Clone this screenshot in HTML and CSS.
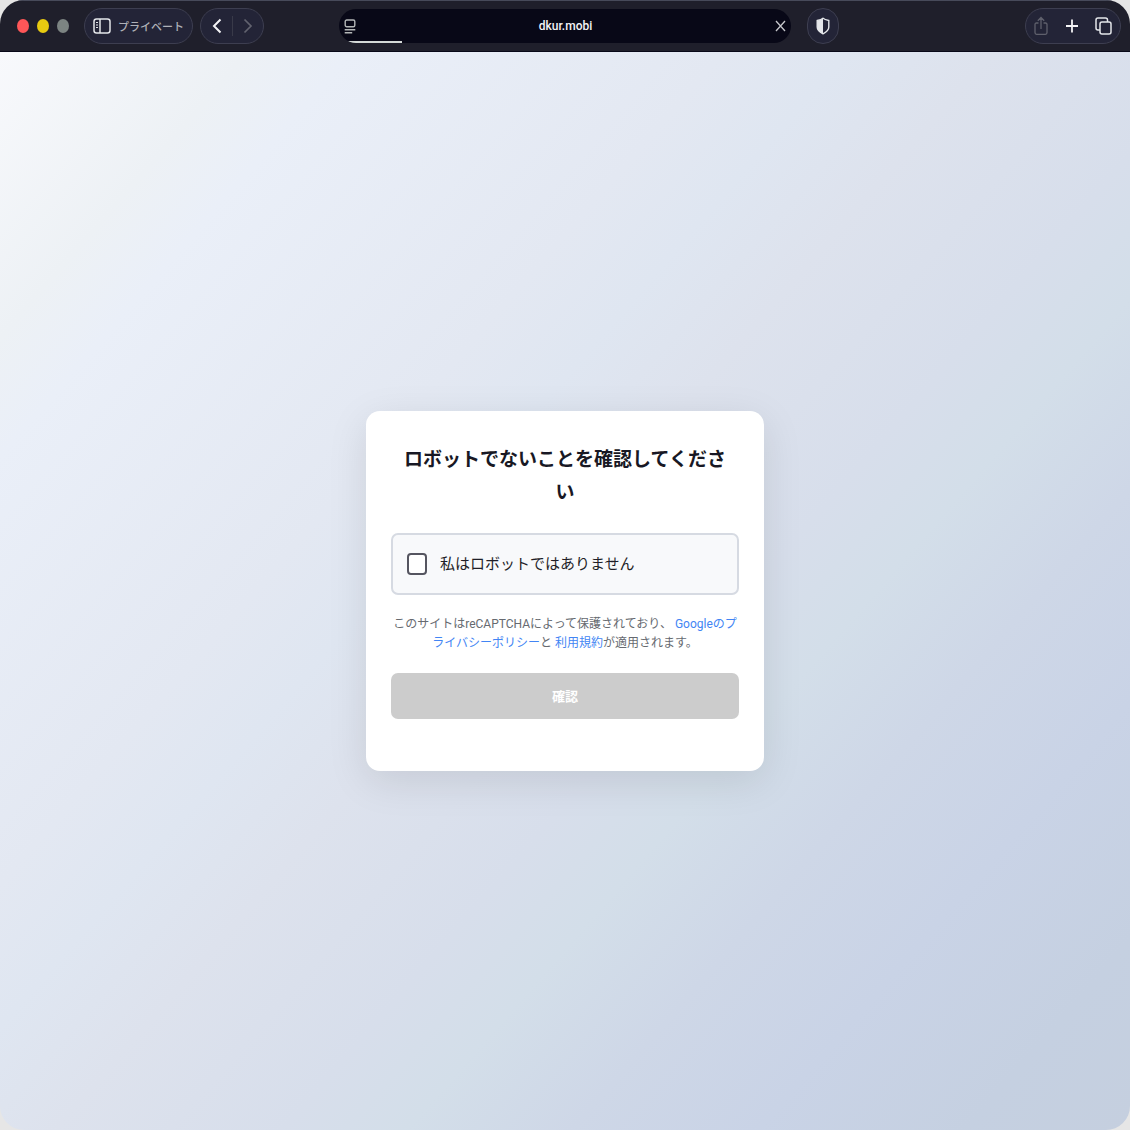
FILE: index.html
```html
<!DOCTYPE html>
<html lang="ja">
<head>
	<meta charset="UTF-8">
	<title>dkur.mobi</title>
	<link rel="stylesheet" href="styles.css">
</head>
<body>
	<div class="window">
		<header class="toolbar">
			<div class="left">
				<div class="lights">
					<button class="light red" aria-label="閉じる"></button>
					<button class="light yellow" aria-label="しまう"></button>
					<button class="light gray" aria-label="拡大"></button>
				</div>
				<button class="pill private">
					<svg width="18" height="16" viewBox="0 0 18 16" fill="none" stroke="#e4e6ea" stroke-width="1.5"><rect x="1" y="1" width="16" height="14" rx="2.5"/><path d="M7 1v14"/><path d="M3 4.5h2M3 7h2M3 9.5h2" stroke-width="1"/></svg>
					<span>プライベート</span>
				</button>
				<div class="pill nav">
					<button aria-label="戻る"><svg width="10" height="16" viewBox="0 0 10 16" fill="none" stroke="#f4f4f6" stroke-width="2"><path d="M8.5 1.5L2 8l6.5 6.5"/></svg></button>
					<button aria-label="進む"><svg width="10" height="16" viewBox="0 0 10 16" fill="none" stroke="#62636f" stroke-width="1.7"><path d="M1.5 1.5L8 8l-6.5 6.5"/></svg></button>
				</div>
			</div>
			<div class="address">
				<button aria-label="ページメニュー"><svg width="12" height="15" viewBox="0 0 12 15" fill="none" stroke="#b4b7b8" stroke-width="1.4"><rect x="1.2" y="1" width="9.6" height="6.8" rx="1.5"/><path d="M.7 10.7h10.6M.7 13.8h7.5"/></svg></button>
				<input class="url" type="text" value="dkur.mobi" aria-label="アドレス">
				<button aria-label="読み込みを中止"><svg width="11" height="12" viewBox="0 0 11 12" stroke="#c6c7cc" stroke-width="1.3"><path d="M1 1l9 10M10 1L1 11"/></svg></button>
				<div class="progress"></div>
			</div>
			<div class="right">
				<button class="pill shield" aria-label="プライバシーレポート"><svg width="14" height="18" viewBox="0 0 14 18"><path d="M7 1.2C5.4 2.4 3.2 3 1.2 3.5V10c0 3.2 2.4 5.2 5.8 6.8 3.4-1.6 5.8-3.6 5.8-6.8V3.5C10.8 3 8.6 2.4 7 1.2z" fill="none" stroke="#e4e6ea" stroke-width="1.4"/><path d="M7 1.2C5.4 2.4 3.2 3 1.2 3.5V10c0 3.2 2.4 5.2 5.8 6.8z" fill="#e4e6ea"/></svg></button>
				<div class="pill tools">
					<button aria-label="共有"><svg width="14" height="20" viewBox="0 0 14 20" fill="none" stroke="#5f606c" stroke-width="1.3"><path d="M4.5 7H2.5Q1 7 1 8.5v8Q1 18.3 2.5 18.3h9q1.5 0 1.5-1.8v-8Q13 7 11.5 7h-2M7 13V1.5M3.8 4.8L7 1.5l3.2 3.3"/></svg></button>
					<button aria-label="新規タブ"><svg width="14" height="14" viewBox="0 0 14 14" stroke="#f4f4f6" stroke-width="1.8"><path d="M7 .5v13M1 7h12"/></svg></button>
					<button aria-label="タブの概要"><svg width="17" height="18" viewBox="0 0 17 18" fill="none" stroke="#e4e6ea" stroke-width="1.5"><rect x="5" y="5" width="11" height="12" rx="2"/><path d="M5 13H3Q1 13 1 11V3Q1 1 3 1h7.5q2 0 2 2v2"/></svg></button>
				</div>
			</div>
		</header>
		<main class="page">
			<form class="card">
				<h1>ロボットでないことを確認してください</h1>
				<div class="check">
					<input type="checkbox" id="robot">
					<label for="robot">私はロボットではありません</label>
				</div>
				<p class="terms">このサイトはreCAPTCHAによって保護されており、 <a href="#">Googleのプライバシーポリシー</a>と <a href="#">利用規約</a>が適用されます。</p>
				<button class="submit" type="button" disabled>確認</button>
			</form>
		</main>
	</div>
</body>
</html>
```

FILE: styles.css
```css
* {margin: 0;padding: 0;box-sizing: border-box;}
html, body {height: 100%;background: #e6e6e6;}
body, button, input {font-family: Roboto, "Noto Sans CJK JP", sans-serif;}
button {border: 0;background: none;}
svg {display: block;}

.window {display: flex;flex-direction: column;height: 100%;border-radius: 24px;overflow: hidden;}

/* toolbar */
.toolbar {display: grid;grid-template-columns: 1fr 40% 1fr;align-items: center;height: 52px;background: #1f1f2b;border-top: 1px solid #474a5a;border-bottom: 1px solid #080818;}
.left {display: flex;align-items: center;gap: 7px;padding-left: 17px;}
.lights {display: flex;gap: 8px;margin-right: 8px;}
.light {width: 12px;height: 14px;border-radius: 50%;}
.red {background: #ff5658;}
.yellow {background: #e8cb10;}
.gray {background: #7c8482;}
.pill {display: flex;align-items: center;height: 36px;background: #232437;border: 1px solid #3d3e50;border-radius: 18px;}
.private {gap: 7px;padding: 0 8px;color: #b0b2b8;font-size: 11px;font-weight: 500;white-space: nowrap;}
.nav button {display: flex;justify-content: center;width: 31px;}
.nav button + button {padding: 2px 0;border-left: 1px solid #393a49;}
.address {position: relative;display: flex;align-items: center;height: 34px;padding: 0 5px;background: #080817;border-radius: 17px;overflow: hidden;}
.url {flex: 1;min-width: 0;border: 0;background: none;color: #f4f4f6;font-size: 12px;font-weight: 500;text-align: center;}
.progress {position: absolute;left: 0;bottom: 0;width: 14%;height: 2px;background: #d5dad8;}
.right {display: flex;align-items: center;justify-content: space-between;padding: 0 9px 0 16px;}
.shield {justify-content: center;width: 32px;}
.tools {justify-content: space-between;width: 96px;padding: 0 8px;}

/* page */
.page {flex: 1;display: flex;align-items: center;justify-content: center;background: linear-gradient(131deg, #f8f9fc 0%, #edf1f5 12%, #eaeff8 17%, #e3e8f2 35%, #dfe6f1 41%, #dde2ed 48%, #d7deeb 59%, #d3dee9 65%, #ced7e7 73%, #c9d3e6 82%, #c5d0e1 92%, #c5cfdf 100%);}
.card {width: 100%;max-width: 398px;padding: 32px 25px 52px;background: #fff;border-radius: 14px;box-shadow: 0 10px 40px rgba(0,0,0,.1);}
h1 {padding: 0 8px;margin-bottom: 24px;color: #181824;font-size: 19px;font-weight: 700;line-height: 33px;text-align: center;}
.check {display: flex;align-items: center;gap: 13px;height: 62px;padding: 0 14px;background: #f8f9fb;border: 2px solid #d6dae2;border-radius: 7px;}
.check input {appearance: none;width: 20px;height: 22px;background: #fff;border: 2px solid #555560;border-radius: 4px;}
.check label {color: #1f1f28;font-size: 15px;line-height: 24px;}
.terms {margin: 20px 0;color: #666a70;font-size: 12px;line-height: 19px;text-align: center;}
.terms a {color: #4285f4;text-decoration: none;}
.submit {display: block;width: 100%;height: 46px;padding-bottom: 2px;background: #ccc;border-radius: 7px;color: #fff;font-size: 13px;font-weight: 700;}
```
